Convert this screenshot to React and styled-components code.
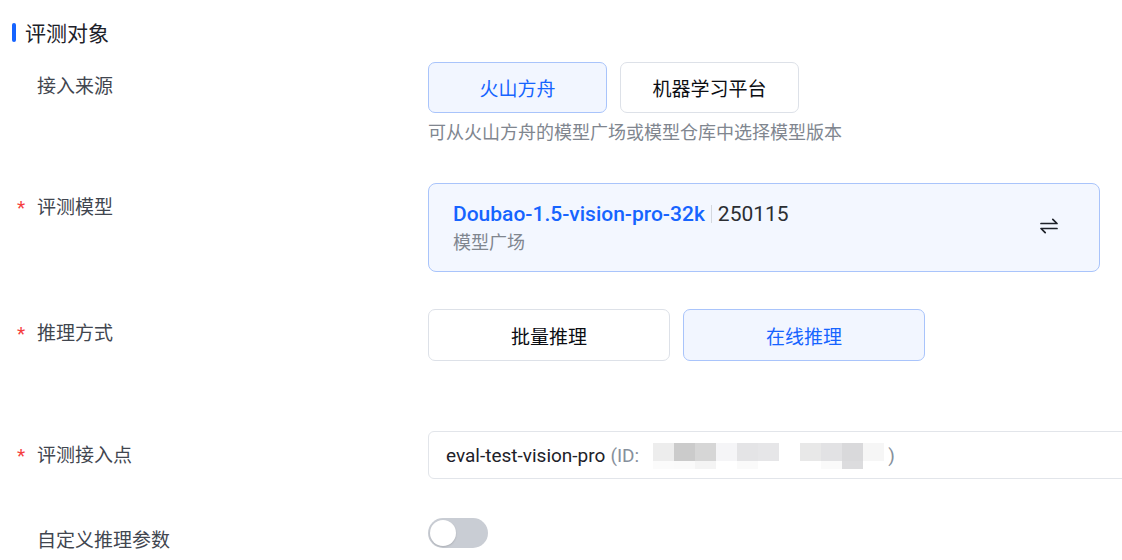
import React, { useState } from "react";
import styled, { createGlobalStyle } from "styled-components";

const GlobalStyle = createGlobalStyle`
  html, body {
    margin: 0;
    padding: 0;
    background: #ffffff;
    overflow: hidden;
  }
  body {
    font-family: Roboto, "Noto Sans CJK SC", "Noto Sans", sans-serif;
    color: #1d2129;
  }
`;

const Page = styled.div`
  width: 1122px;
  height: 560px;
  overflow: hidden;
  padding-top: 20px;
  box-sizing: border-box;
`;

const SectionTitle = styled.div`
  display: flex;
  align-items: center;
  gap: 9px;
  padding-left: 12px;
  height: 24px;
  font-size: 21px;
  color: #1d2129;
  margin-bottom: 18px;

  &::before {
    content: "";
    width: 4px;
    height: 19px;
    border-radius: 2px;
    background: #1664ff;
  }
`;

const FormItem = styled.div`
  display: flex;
  align-items: flex-start;
  margin-bottom: ${(p) => p.$gap || 0}px;
`;

const Label = styled.div`
  width: 428px;
  flex-shrink: 0;
  display: flex;
  align-items: center;
  height: 45px;
  padding-left: 17px;
  box-sizing: border-box;
  font-size: 19px;
  color: #41464f;
`;

const Star = styled.span`
  width: 20px;
  color: #f53f3f;
  font-size: 19px;
  line-height: 1;
  padding-top: 4px;
`;

const Control = styled.div`
  display: flex;
  flex-direction: column;
`;

const OptionRow = styled.div`
  display: flex;
  gap: 13px;
`;

const Option = styled.button`
  width: ${(p) => p.$w}px;
  height: ${(p) => p.$h}px;
  border-radius: 7px;
  box-sizing: border-box;
  font-family: inherit;
  font-size: 19px;
  cursor: pointer;
  border: 1px solid ${(p) => (p.$active ? "#a9c4fb" : "#dde1e8")};
  background: ${(p) => (p.$active ? "#f2f6ff" : "#ffffff")};
  color: ${(p) => (p.$active ? "#1664ff" : "#0b0d12")};
`;

const Hint = styled.div`
  margin-top: 8px;
  font-size: 18px;
  line-height: 24px;
  color: #80868f;
`;

const ModelCard = styled.div`
  width: 672px;
  height: 89px;
  box-sizing: border-box;
  border: 1px solid #a9c4fb;
  border-radius: 8px;
  background: #f3f7ff;
  padding: 17px 41px 16px 24px;
  display: flex;
  align-items: center;
  justify-content: space-between;
`;

const ModelInfo = styled.div`
  display: flex;
  flex-direction: column;
  gap: 4px;
`;

const ModelLine = styled.div`
  display: flex;
  align-items: center;
  height: 26px;
  font-size: 21px;
`;

const ModelName = styled.span`
  color: #1664ff;
  font-weight: 500;
`;

const Divider = styled.span`
  width: 1px;
  height: 18px;
  background: #d4d8de;
  margin: 0 6px;
`;

const Version = styled.span`
  color: #2b2e33;
`;

const ModelSource = styled.div`
  font-size: 18px;
  line-height: 24px;
  color: #80868f;
`;

const SwapButton = styled.button`
  border: none;
  background: transparent;
  padding: 0;
  margin-bottom: 4px;
  display: flex;
  cursor: pointer;
`;

const EndpointBox = styled.div`
  width: 740px;
  height: 48px;
  box-sizing: border-box;
  border: 1px solid #e2e5ea;
  border-radius: 6px;
  display: flex;
  align-items: center;
  padding-left: 17px;
  font-size: 19px;
  color: #1d2129;
`;

const Muted = styled.span`
  color: #86909c;
  margin-left: ${(p) => (p.$tight ? 0 : 5)}px;
`;

const Masked = styled.span`
  display: grid;
  grid-template-columns: repeat(11, 21px);
  grid-template-rows: 18px 8px;
  margin: 2px 4px 0 14px;
`;

const Pixel = styled.span`
  background: ${(p) => p.$c};
`;

const Switch = styled.button`
  width: 60px;
  height: 30px;
  border-radius: 15px;
  border: none;
  padding: 0;
  margin-top: 2px;
  background: #c9cdd4;
  position: relative;
  cursor: pointer;

  &::after {
    content: "";
    position: absolute;
    top: 2px;
    left: ${(p) => (p.$on ? "32px" : "2px")};
    width: 26px;
    height: 26px;
    border-radius: 50%;
    background: #ffffff;
    box-shadow: 0 1px 2px rgba(0, 0, 0, 0.15);
  }
`;

const SwapIcon = () => (
  <svg width="18" height="18" viewBox="0 0 18 18" fill="none">
    <path d="M1 6.5H17L12.8 2.3" stroke="#1d2129" strokeWidth="1.7" strokeLinecap="round" strokeLinejoin="round" />
    <path d="M17 11.5H1L5.2 15.7" stroke="#1d2129" strokeWidth="1.7" strokeLinecap="round" strokeLinejoin="round" />
  </svg>
);

const topPixels = ["#ededed", "#cbcbcb", "#d6d6d6", "#f5f5f7", "#e4e4e6", "#e6e6e8", "#ffffff", "#e8e8e8", "#e2e2e4", "#d9d9db", "#f6f6f6"];
const bottomPixels = ["#fbfbfb", "#fafafa", "#f4f4f4", "#ffffff", "#fafafa", "#ffffff", "#ffffff", "#ffffff", "#fafafa", "#dcdcde", "#ffffff"];

function App() {
  const [source, setSource] = useState("ark");
  const [mode, setMode] = useState("online");
  const [custom, setCustom] = useState(false);

  return (
    <>
      <GlobalStyle />
      <Page>
        <SectionTitle>评测对象</SectionTitle>

        <FormItem $gap={38}>
          <Label>
            <Star />
            接入来源
          </Label>
          <Control>
            <OptionRow>
              <Option $w={179} $h={51} $active={source === "ark"} onClick={() => setSource("ark")}>
                火山方舟
              </Option>
              <Option $w={179} $h={51} $active={source === "ml"} onClick={() => setSource("ml")}>
                机器学习平台
              </Option>
            </OptionRow>
            <Hint>可从火山方舟的模型广场或模型仓库中选择模型版本</Hint>
          </Control>
        </FormItem>

        <FormItem $gap={37}>
          <Label>
            <Star>*</Star>
            评测模型
          </Label>
          <Control>
            <ModelCard>
              <ModelInfo>
                <ModelLine>
                  <ModelName>Doubao-1.5-vision-pro-32k</ModelName>
                  <Divider />
                  <Version>250115</Version>
                </ModelLine>
                <ModelSource>模型广场</ModelSource>
              </ModelInfo>
              <SwapButton>
                <SwapIcon />
              </SwapButton>
            </ModelCard>
          </Control>
        </FormItem>

        <FormItem $gap={70}>
          <Label>
            <Star>*</Star>
            推理方式
          </Label>
          <Control>
            <OptionRow>
              <Option $w={242} $h={52} $active={mode === "batch"} onClick={() => setMode("batch")}>
                批量推理
              </Option>
              <Option $w={242} $h={52} $active={mode === "online"} onClick={() => setMode("online")}>
                在线推理
              </Option>
            </OptionRow>
          </Control>
        </FormItem>

        <FormItem $gap={37}>
          <Label>
            <Star>*</Star>
            评测接入点
          </Label>
          <Control>
            <EndpointBox>
              eval-test-vision-pro
              <Muted>(ID: </Muted>
              <Masked>
                {topPixels.map((c, i) => (
                  <Pixel key={"t" + i} $c={c} />
                ))}
                {bottomPixels.map((c, i) => (
                  <Pixel key={"b" + i} $c={c} />
                ))}
              </Masked>
              <Muted $tight>)</Muted>
            </EndpointBox>
          </Control>
        </FormItem>

        <FormItem>
          <Label>
            <Star />
            自定义推理参数
          </Label>
          <Control>
            <Switch $on={custom} onClick={() => setCustom(!custom)} />
          </Control>
        </FormItem>
      </Page>
    </>
  );
}

export default App;
